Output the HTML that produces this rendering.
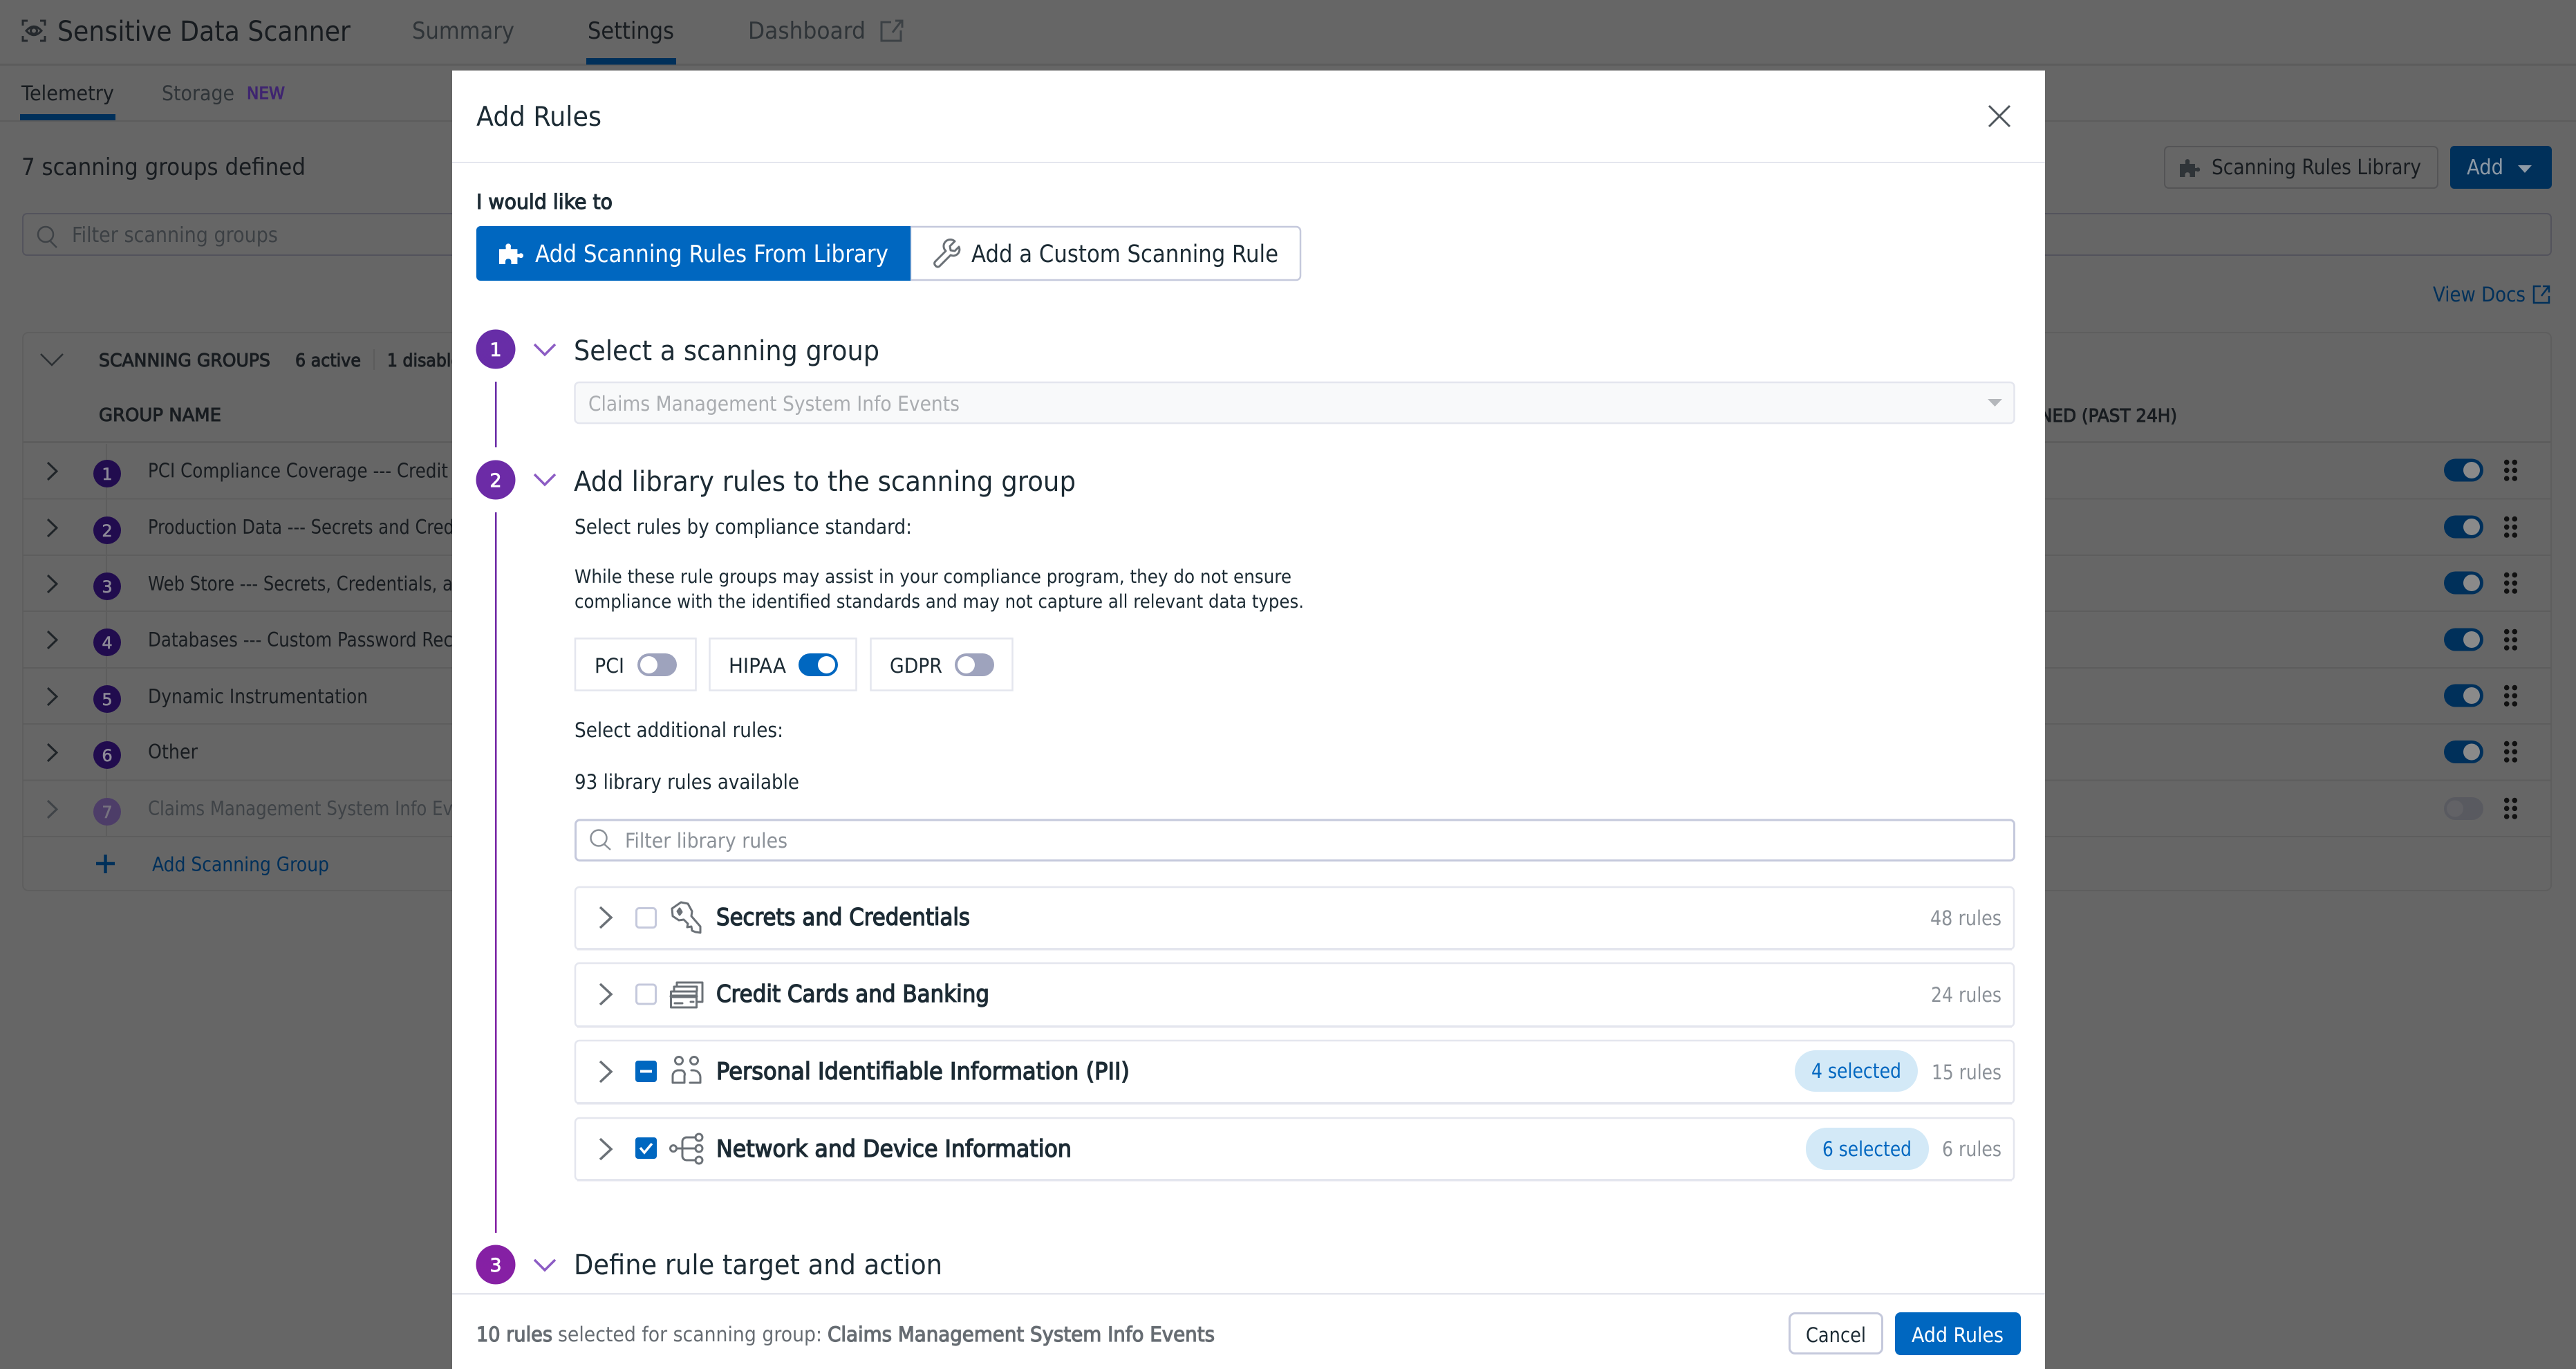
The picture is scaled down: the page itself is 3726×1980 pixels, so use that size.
<!DOCTYPE html>
<html lang="en"><head><meta charset="utf-8"><title>Add Rules</title>
<style>
html,body{margin:0;padding:0;background:#666;width:3726px;height:1980px;overflow:hidden}
svg{display:block}
text{font-family:"DejaVu Sans","Liberation Sans",sans-serif;white-space:pre}
.d{fill:#181c20}.g{fill:#2f3438}.dim{fill:#3f4347}.bl{fill:#00305a}
.sb{stroke-width:1}
.m{fill:#1c2b34}.mg{fill:#8b9198}.w{fill:#fff}
.ic{fill:none;stroke:#6b7177;stroke-width:3;stroke-linecap:round;stroke-linejoin:round}
</style></head><body>
<svg xmlns="http://www.w3.org/2000/svg" width="3726" height="1980" viewBox="0 0 3726 1980">
<defs>
<linearGradient id="pg" gradientUnits="userSpaceOnUse" x1="0" y1="477" x2="0" y2="1858"><stop offset="0" stop-color="#672da7"/><stop offset="1" stop-color="#8620a4"/></linearGradient>
<path id="puz" d="M0 8h8V5.500a3.200 3.200 0 1 1 6 0V8h8v6h2.200a3 3 0 1 1 0 4.500H22V27H14.500v-4a3.600 3.600 0 0 0-7 0v4H0z"/>
<g id="grip" fill="#111"><circle cx="3625.700" cy="-11.700" r="3.800"/><circle cx="3637.300" cy="-11.700" r="3.800"/><circle cx="3625.700" cy="0" r="3.800"/><circle cx="3637.300" cy="0" r="3.800"/><circle cx="3625.700" cy="11.700" r="3.800"/><circle cx="3637.300" cy="11.700" r="3.800"/></g>
</defs>
<rect width="3726" height="1980" fill="#666"/>

<!-- top nav -->
<rect x="0" y="92" width="3726" height="3" fill="#5c5c5c"/>
<g fill="none" stroke="#25292d" stroke-width="3">
<path d="M33 37v-7h7M58 30h7v7M33 52v7h7M58 59h7v-7"/>
<path d="M38 44.500q11-12.500 22 0q-11 12.500-22 0z"/><circle cx="49" cy="44.500" r="4.500"/>
</g>
<text x="83" y="59" font-size="40" class="d" textLength="424" lengthAdjust="spacingAndGlyphs">Sensitive Data Scanner</text>
<text x="596" y="56" font-size="34" class="g" textLength="148" lengthAdjust="spacingAndGlyphs">Summary</text>
<text x="850" y="56" font-size="34" class="d" textLength="125" lengthAdjust="spacingAndGlyphs">Settings</text>
<rect x="848" y="84" width="130" height="9.500" fill="#00305a"/>
<text x="1082" y="56" font-size="34" class="g" textLength="170" lengthAdjust="spacingAndGlyphs">Dashboard</text>
<path d="M1289 32h-14v27h28V44M1291 47l13-17M1295 30h10v10" fill="none" stroke="#3c4145" stroke-width="3"/>

<!-- sub tabs -->
<rect x="0" y="174" width="3726" height="2" fill="#5c5c5c"/>
<text x="31" y="145" font-size="29" class="d" textLength="134" lengthAdjust="spacingAndGlyphs">Telemetry</text>
<rect x="29" y="165" width="138" height="9" fill="#00305a"/>
<text x="234" y="145" font-size="29" class="g" textLength="105" lengthAdjust="spacingAndGlyphs">Storage</text>
<text x="357" y="143" font-size="24" fill="#3f2570" stroke="#3f2570" class="sb" textLength="55" lengthAdjust="spacingAndGlyphs">NEW</text>

<text x="31" y="253" font-size="34" class="d" textLength="411" lengthAdjust="spacingAndGlyphs">7 scanning groups defined</text>

<!-- right buttons -->
<rect x="3131" y="212" width="395" height="60" rx="6" fill="none" stroke="#545456" stroke-width="2"/>
<use href="#puz" transform="translate(3153,229)" fill="#2f3438"/>
<text x="3199" y="252" font-size="30" class="d" textLength="303" lengthAdjust="spacingAndGlyphs">Scanning Rules Library</text>
<rect x="3544" y="211" width="147" height="62" rx="6" fill="#00305a"/>
<text x="3568" y="252" font-size="30" fill="#8e9aa6" textLength="53" lengthAdjust="spacingAndGlyphs">Add</text>
<path d="M3642 239h20l-10 11z" fill="#8e9aa6"/>

<!-- filter -->
<rect x="33" y="309" width="3657" height="60" rx="6" fill="none" stroke="#53535c" stroke-width="2"/>
<g fill="none" stroke="#3e4246" stroke-width="2.500"><circle cx="66" cy="339" r="11"/><path d="M73 349l9 9"/></g>
<text x="104" y="350" font-size="30" fill="#3c4044" textLength="298" lengthAdjust="spacingAndGlyphs">Filter scanning groups</text>

<text x="3519" y="436" font-size="29.500" class="bl" textLength="134" lengthAdjust="spacingAndGlyphs">View Docs</text>
<path d="M3675 414h-10v24h22v-10M3676 428l10-13M3678 414h9v9" fill="none" stroke="#00305a" stroke-width="2.500"/>

<!-- table -->
<rect x="33" y="481" width="3657" height="807" rx="8" fill="none" stroke="#5e5e5e" stroke-width="2"/>
<rect x="33" y="638" width="3657" height="3" fill="#5d5d5d"/>
<path d="M59 512l16 16 16-16" fill="none" stroke="#2a2e32" stroke-width="2.500"/>
<g font-size="26" class="d sb" stroke="#181c20">
<text x="143" y="530" textLength="248" lengthAdjust="spacingAndGlyphs">SCANNING GROUPS</text>
<text x="427" y="530" textLength="95" lengthAdjust="spacingAndGlyphs">6 active</text>
<text x="560" y="530" textLength="122" lengthAdjust="spacingAndGlyphs">1 disabled</text>
<text x="143" y="609" textLength="177" lengthAdjust="spacingAndGlyphs">GROUP NAME</text>
<text x="2950" y="610" textLength="199" lengthAdjust="spacingAndGlyphs">NED (PAST 24H)</text>
</g>
<rect x="540" y="505" width="2" height="30" fill="#5c5c5c"/>

<g fill="#5d5d5d">
<rect x="33" y="720.500" width="3657" height="2"/><rect x="33" y="802" width="3657" height="2"/><rect x="33" y="883" width="3657" height="2"/><rect x="33" y="965" width="3657" height="2"/><rect x="33" y="1046" width="3657" height="2"/><rect x="33" y="1127.500" width="3657" height="2"/><rect x="33" y="1209" width="3657" height="2"/>
<rect x="153" y="642" width="2" height="568"/>
</g>
<g fill="none" stroke="#1f2428" stroke-width="3">
<path d="M69 669l13 12.500-13 12.500M69 751l13 12.500-13 12.500M69 832l13 12.500-13 12.500M69 913l13 12.500-13 12.500M69 995l13 12.500-13 12.500M69 1076l13 12.500-13 12.500"/>
<path d="M69 1158l13 12.500-13 12.500" stroke="#3f4347"/>
</g>
<g fill="#210c4e">
<circle cx="155" cy="685" r="20"/><circle cx="155" cy="767" r="20"/><circle cx="155" cy="848" r="20"/><circle cx="155" cy="929" r="20"/><circle cx="155" cy="1011" r="20"/><circle cx="155" cy="1092" r="20"/>
<circle cx="155" cy="1174" r="20" fill="#4d3d68"/>
</g>
<g font-size="24" fill="#8e8a98" text-anchor="middle" stroke="#8e8a98" style="stroke-width:.6">
<text x="155" y="694">1</text><text x="155" y="776">2</text><text x="155" y="857">3</text><text x="155" y="938">4</text><text x="155" y="1020">5</text><text x="155" y="1101">6</text><text x="155" y="1183" fill="#77737f" stroke="#77737f">7</text>
</g>
<g font-size="28.500">
<text x="214" y="690.500" class="d" textLength="434" lengthAdjust="spacingAndGlyphs">PCI Compliance Coverage --- Credit</text>
<text x="214" y="772" class="d" textLength="443" lengthAdjust="spacingAndGlyphs">Production Data --- Secrets and Cred</text>
<text x="214" y="854" class="d" textLength="441" lengthAdjust="spacingAndGlyphs">Web Store --- Secrets, Credentials, a</text>
<text x="214" y="935" class="d" textLength="441" lengthAdjust="spacingAndGlyphs">Databases --- Custom Password Rec</text>
<text x="214" y="1017" class="d" textLength="318" lengthAdjust="spacingAndGlyphs">Dynamic Instrumentation</text>
<text x="214" y="1097" class="d" textLength="72" lengthAdjust="spacingAndGlyphs">Other</text>
<text x="214" y="1179" class="dim" textLength="441" lengthAdjust="spacingAndGlyphs">Claims Management System Info Ev</text>
<text x="220" y="1260" class="bl" textLength="256" lengthAdjust="spacingAndGlyphs">Add Scanning Group</text>
</g>
<path d="M139 1249h27M152.500 1236v27" stroke="#00305a" stroke-width="4.500"/>

<!-- background toggles -->
<g fill="#00305a">
<rect x="3535" y="663.500" width="57" height="33" rx="16.500"/><rect x="3535" y="745.500" width="57" height="33" rx="16.500"/><rect x="3535" y="826.500" width="57" height="33" rx="16.500"/><rect x="3535" y="908.500" width="57" height="33" rx="16.500"/><rect x="3535" y="989.500" width="57" height="33" rx="16.500"/><rect x="3535" y="1071" width="57" height="33" rx="16.500"/>
<rect x="3535" y="1153" width="57" height="33" rx="16.500" fill="#595a60"/>
</g>
<g fill="#8a8a8a">
<circle cx="3575" cy="680" r="12"/><circle cx="3575" cy="762" r="12"/><circle cx="3575" cy="843" r="12"/><circle cx="3575" cy="925" r="12"/><circle cx="3575" cy="1006" r="12"/><circle cx="3575" cy="1087.500" r="12"/>
<circle cx="3551" cy="1169.500" r="12" fill="#626266"/>
</g>
<use href="#grip" y="680.300"/><use href="#grip" y="762.300"/><use href="#grip" y="843.300"/><use href="#grip" y="925.300"/><use href="#grip" y="1006.300"/><use href="#grip" y="1087.300"/><use href="#grip" y="1169.300"/>

<!-- MODAL -->
<rect x="654" y="102" width="2304" height="1878" fill="#fff"/>
<rect x="654" y="234" width="2304" height="2" fill="#e4e6ee"/>
<text x="689" y="182" font-size="39.500" class="m" textLength="181" lengthAdjust="spacingAndGlyphs">Add Rules</text>
<path d="M2877 153l30 30M2907 153l-30 30" stroke="#4f565c" stroke-width="3" fill="none"/>

<text x="689" y="302" font-size="29" class="m" stroke="#1c2b34" style="stroke-width:1.200" textLength="197" lengthAdjust="spacingAndGlyphs">I would like to</text>

<!-- segmented -->
<path d="M1317 328h558a6 6 0 0 1 6 6v65a6 6 0 0 1-6 6h-558z" fill="#fff" stroke="#c5c9dc" stroke-width="2.500"/>
<path d="M695 327h622v79H695a6 6 0 0 1-6-6v-67a6 6 0 0 1 6-6z" fill="#0067c0"/>
<use href="#puz" transform="translate(722,351) scale(1.200,1.150)" fill="#fff"/>
<text x="774" y="379" font-size="34.500" class="w" textLength="511" lengthAdjust="spacingAndGlyphs">Add Scanning Rules From Library</text>
<path d="M1381 349l-7 7 1 6 6 1 6-6a9 9 0 0 1-12 12l-16 16a4 4 0 0 1-6-1a4 4 0 0 1 0-6l15-15a9 9 0 0 1 13-14z" fill="none" stroke="#6b7177" stroke-width="3" stroke-linejoin="round"/>
<text x="1405" y="379" font-size="34.500" class="m" textLength="444" lengthAdjust="spacingAndGlyphs">Add a Custom Scanning Rule</text>

<!-- steps -->
<rect x="716" y="552" width="2.500" height="95" fill="url(#pg)"/>
<rect x="716" y="741" width="2.500" height="1042" fill="url(#pg)"/>
<circle cx="717" cy="505" r="28.500" fill="url(#pg)"/>
<circle cx="717" cy="694" r="28.500" fill="url(#pg)"/>
<circle cx="717" cy="1829" r="28.500" fill="url(#pg)"/>
<g font-size="27" class="w" text-anchor="middle" stroke="#fff" style="stroke-width:.8">
<text x="717" y="515">1</text><text x="717" y="704">2</text><text x="717" y="1839">3</text>
</g>
<path d="M773 498l15 15 15-15M773 686l15 15 15-15M773 1822l15 15 15-15" fill="none" stroke="#8c5cc4" stroke-width="3.500"/>
<text x="830" y="521" font-size="40" class="m" textLength="442" lengthAdjust="spacingAndGlyphs">Select a scanning group</text>
<text x="830" y="710" font-size="40" class="m" textLength="726" lengthAdjust="spacingAndGlyphs">Add library rules to the scanning group</text>
<text x="830" y="1843" font-size="40" class="m" textLength="533" lengthAdjust="spacingAndGlyphs">Define rule target and action</text>

<!-- select -->
<rect x="831.500" y="553" width="2082" height="59" rx="6" fill="#f8f9fa" stroke="#e4e6ee" stroke-width="2.500"/>
<text x="851" y="594" font-size="29.500" fill="#a9acb0" textLength="537" lengthAdjust="spacingAndGlyphs">Claims Management System Info Events</text>
<path d="M2875 577h21l-10.500 11z" fill="#b4b7bb"/>

<text x="831" y="772" font-size="29" class="m" textLength="488" lengthAdjust="spacingAndGlyphs">Select rules by compliance standard:</text>
<text x="831" y="843" font-size="26.500" class="m" textLength="1037" lengthAdjust="spacingAndGlyphs">While these rule groups may assist in your compliance program, they do not ensure</text>
<text x="831" y="879" font-size="26.500" class="m" textLength="1055" lengthAdjust="spacingAndGlyphs">compliance with the identified standards and may not capture all relevant data types.</text>

<!-- compliance toggles -->
<g fill="#fff" stroke="#e4e6ee" stroke-width="2.500">
<rect x="832" y="923.500" width="174.500" height="75"/><rect x="1026.500" y="923.500" width="212" height="75"/><rect x="1259.500" y="923.500" width="205" height="75"/>
</g>
<text x="860" y="973" font-size="29.500" class="m" textLength="43" lengthAdjust="spacingAndGlyphs">PCI</text>
<text x="1054" y="973" font-size="29.500" class="m" textLength="83" lengthAdjust="spacingAndGlyphs">HIPAA</text>
<text x="1287" y="973" font-size="29.500" class="m" textLength="76" lengthAdjust="spacingAndGlyphs">GDPR</text>
<rect x="922" y="945" width="57" height="33" rx="16.500" fill="#9ea3bd"/><circle cx="938.500" cy="961.500" r="12.500" fill="#fff"/>
<rect x="1155" y="945" width="57" height="33" rx="16.500" fill="#0067c0"/><circle cx="1195.500" cy="961.500" r="12.500" fill="#fff"/>
<rect x="1381" y="945" width="57" height="33" rx="16.500" fill="#9ea3bd"/><circle cx="1397.500" cy="961.500" r="12.500" fill="#fff"/>

<text x="831" y="1066" font-size="29" class="m" textLength="302" lengthAdjust="spacingAndGlyphs">Select additional rules:</text>
<text x="831" y="1141" font-size="29" class="m" textLength="325" lengthAdjust="spacingAndGlyphs">93 library rules available</text>

<rect x="832.500" y="1186" width="2081" height="58.500" rx="6" fill="#fff" stroke="#c5c9dc" stroke-width="3"/>
<g fill="none" stroke="#8b9198" stroke-width="2.500"><circle cx="866" cy="1212" r="11.500"/><path d="M874 1221l9 8"/></g>
<text x="904" y="1226" font-size="29.500" class="mg" textLength="235" lengthAdjust="spacingAndGlyphs">Filter library rules</text>

<!-- rule rows -->
<g fill="#fff" stroke="#e4e6ee" stroke-width="2.500">
<rect x="832" y="1283" width="2081" height="90" rx="6"/><rect x="832" y="1393" width="2081" height="92" rx="6"/><rect x="832" y="1505" width="2081" height="91" rx="6"/><rect x="832" y="1617" width="2081" height="90" rx="6"/>
</g>
<g fill="#e4e6ee"><rect x="835" y="1371" width="2075" height="3.500"/><rect x="835" y="1483" width="2075" height="3.500"/><rect x="835" y="1594" width="2075" height="3.500"/><rect x="835" y="1705" width="2075" height="3.500"/></g>
<path d="M868 1312l16 15-16 15M868 1423l16 15-16 15M868 1535l16 15-16 15M868 1647l16 15-16 15" fill="none" stroke="#6b7177" stroke-width="3.500"/>
<rect x="920.500" y="1313.500" width="28" height="28" rx="4" fill="#fff" stroke="#c5c9dc" stroke-width="3"/>
<rect x="920.500" y="1424" width="28" height="28" rx="4" fill="#fff" stroke="#c5c9dc" stroke-width="3"/>
<rect x="919" y="1534" width="31" height="31" rx="4" fill="#0067c0"/><rect x="926" y="1547.500" width="17" height="4" fill="#fff"/>
<rect x="919" y="1645" width="31" height="31" rx="4" fill="#0067c0"/><path d="M926 1660l6 7 11-13" fill="none" stroke="#fff" stroke-width="3.500"/>

<!-- key -->
<g class="ic"><path d="M985 1305l-13 9 1 11 9 6 7-1 6 6-1 5 6-1 1 6 5 2 7 1 0-9-13-15 1-7-6-11z"/><path d="M983 1314l3 5-3 4-3-5z" fill="#6b7177"/></g>
<!-- cards -->
<g class="ic" stroke-linecap="butt" stroke-linejoin="miter"><path d="M979 1427v-6h37v28h-6"/><path d="M975 1434v-7h33v6"/><rect x="970.500" y="1434" width="37" height="23"/><path d="M971 1441h36" stroke-width="5"/><path d="M976 1451h11M999 1449h4"/></g>
<!-- people -->
<g class="ic" stroke-linecap="butt"><circle cx="982" cy="1534" r="5.500"/><circle cx="1004" cy="1534" r="5.500"/><path d="M973 1566v-10a8 8 0 0 1 8-8h5a6 6 0 0 1 4 8v10z"/><path d="M1000 1548h3a10 10 0 0 1 10 10v8h-15"/></g>
<!-- network -->
<g class="ic" stroke-linecap="butt"><circle cx="974" cy="1661" r="4.500"/><circle cx="1011" cy="1645" r="5"/><circle cx="1011" cy="1661" r="5"/><circle cx="1011" cy="1678" r="5"/><path d="M979 1661h26M987 1661v-10a6 6 0 0 1 6-6h12M987 1661v11a6 6 0 0 0 6 6h12"/></g>

<g font-size="33.500" class="m" stroke="#1c2b34" style="stroke-width:1.400">
<text x="1036" y="1338" textLength="367" lengthAdjust="spacingAndGlyphs">Secrets and Credentials</text>
<text x="1036" y="1449" textLength="395" lengthAdjust="spacingAndGlyphs">Credit Cards and Banking</text>
<text x="1036" y="1561" textLength="598" lengthAdjust="spacingAndGlyphs">Personal Identifiable Information (PII)</text>
<text x="1036" y="1673" textLength="514" lengthAdjust="spacingAndGlyphs">Network and Device Information</text>
</g>
<g font-size="29" class="mg">
<text x="2792" y="1338" textLength="103" lengthAdjust="spacingAndGlyphs">48 rules</text>
<text x="2793" y="1449" textLength="102" lengthAdjust="spacingAndGlyphs">24 rules</text>
<text x="2794" y="1561" textLength="101" lengthAdjust="spacingAndGlyphs">15 rules</text>
<text x="2809" y="1672" textLength="86" lengthAdjust="spacingAndGlyphs">6 rules</text>
</g>
<rect x="2596" y="1519" width="178" height="60" rx="30" fill="#d3e9f7"/>
<rect x="2612" y="1631" width="178" height="61" rx="30" fill="#d3e9f7"/>
<text x="2620" y="1559" font-size="29" fill="#0067c0" textLength="130" lengthAdjust="spacingAndGlyphs">4 selected</text>
<text x="2636" y="1672" font-size="29" fill="#0067c0" textLength="129" lengthAdjust="spacingAndGlyphs">6 selected</text>

<!-- footer -->
<rect x="654" y="1870" width="2304" height="2.500" fill="#e4e6ee"/>
<rect x="654" y="1872.500" width="2304" height="107.500" fill="#fff"/>
<g font-size="29" fill="#666c72">
<text x="689" y="1940" stroke="#666c72" style="stroke-width:1.200" textLength="110" lengthAdjust="spacingAndGlyphs">10 rules</text>
<text x="807" y="1940" textLength="382" lengthAdjust="spacingAndGlyphs">selected for scanning group:</text>
<text x="1197" y="1940" stroke="#666c72" style="stroke-width:1.200" textLength="560" lengthAdjust="spacingAndGlyphs">Claims Management System Info Events</text>
</g>
<rect x="2588.500" y="1899.500" width="134" height="58" rx="8" fill="#fff" stroke="#c5c9dc" stroke-width="3"/>
<text x="2612" y="1941" font-size="29.500" class="m" textLength="87" lengthAdjust="spacingAndGlyphs">Cancel</text>
<rect x="2741" y="1898" width="182" height="62" rx="8" fill="#0067c0"/>
<text x="2765" y="1941" font-size="29.500" class="w" textLength="133" lengthAdjust="spacingAndGlyphs">Add Rules</text>
</svg>
</body></html>
